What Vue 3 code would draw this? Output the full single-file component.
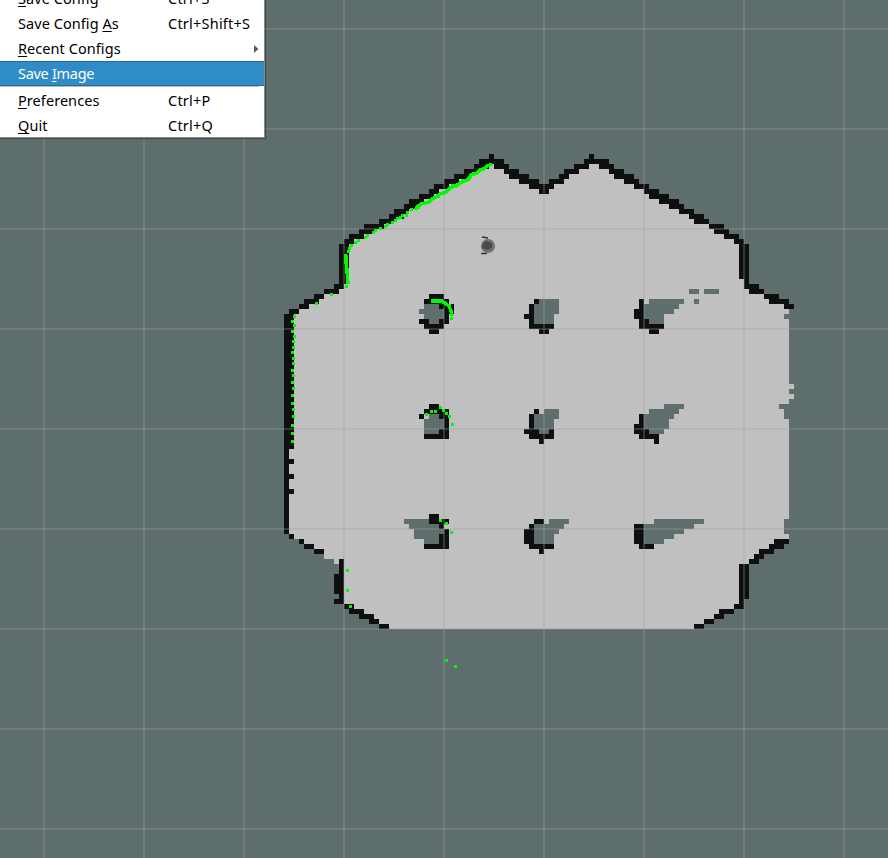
<script setup>
const gridX = Array.from({ length: 9 }, (_, i) => 43 + i * 100)
const gridY = Array.from({ length: 9 }, (_, i) => 28 + i * 100)

// Free space: [x1, y1, x2, y2]
const free = [
  [474, 164, 509, 169], [574, 164, 614, 169], [464, 169, 519, 174], [564, 169, 624, 174],
  [454, 174, 529, 179], [559, 174, 634, 179], [444, 179, 539, 184], [549, 179, 639, 184],
  [434, 184, 649, 189], [429, 189, 659, 194], [419, 194, 669, 199], [409, 199, 679, 204],
  [404, 204, 684, 209], [394, 209, 694, 214], [389, 214, 704, 219], [379, 219, 709, 224],
  [364, 224, 724, 229], [359, 229, 729, 234], [349, 234, 739, 239], [344, 239, 744, 244],
  [344, 244, 744, 289], [324, 289, 759, 294], [314, 294, 779, 299], [304, 299, 789, 304],
  [299, 304, 789, 309], [289, 309, 789, 534], [294, 534, 789, 539], [304, 539, 779, 544],
  [314, 544, 774, 549], [324, 549, 769, 554], [324, 554, 759, 559], [334, 559, 754, 564],
  [339, 564, 744, 604], [349, 604, 739, 609], [359, 609, 724, 614], [369, 614, 719, 619],
  [379, 619, 709, 624], [384, 624, 699, 629], [789, 384, 794, 389], [789, 394, 794, 399]
]

const unknown = [
  [689, 289, 699, 294], [704, 289, 719, 294], [694, 299, 699, 304],
  [784, 314, 789, 319], [779, 404, 789, 409], [784, 409, 789, 419], [784, 519, 789, 534],
  [424, 304, 444, 319], [429, 319, 439, 324], [419, 309, 424, 314],
  [539, 299, 559, 314], [534, 304, 554, 324],
  [649, 299, 684, 304], [644, 304, 679, 309], [644, 309, 674, 314], [644, 314, 664, 324],
  [424, 419, 444, 434], [429, 414, 439, 419],
  [544, 409, 559, 419], [534, 414, 554, 434],
  [664, 404, 684, 409], [649, 409, 679, 414], [644, 414, 674, 419], [644, 419, 669, 429], [649, 429, 664, 434],
  [404, 519, 429, 524], [409, 524, 439, 529], [414, 529, 444, 534], [414, 534, 439, 539], [424, 539, 439, 544],
  [549, 519, 569, 524], [534, 524, 564, 529], [534, 529, 559, 534], [534, 534, 554, 544],
  [654, 519, 704, 524], [644, 524, 694, 529], [644, 529, 684, 534], [644, 534, 674, 539], [644, 539, 664, 544]
]

const walls = [
  [489, 154, 494, 159], [479, 159, 504, 164], [474, 164, 489, 169], [464, 169, 479, 174],
  [454, 174, 469, 179], [444, 179, 459, 184], [434, 184, 449, 189], [429, 189, 439, 194],
  [419, 194, 434, 199], [409, 199, 424, 204], [404, 204, 419, 209], [394, 209, 409, 214],
  [389, 214, 404, 219], [379, 219, 394, 224], [364, 224, 384, 229], [359, 229, 374, 234],
  [349, 234, 364, 239], [344, 239, 354, 244], [344, 244, 349, 284], [339, 244, 344, 289],
  [334, 284, 344, 289], [324, 289, 339, 294], [314, 294, 324, 299], [304, 299, 319, 304],
  [299, 304, 309, 309], [289, 309, 299, 314], [284, 314, 294, 449], [284, 449, 289, 534],
  [289, 459, 294, 464], [289, 474, 294, 479], [289, 489, 294, 494], [289, 534, 294, 539],
  [299, 539, 304, 544], [304, 544, 314, 549], [314, 549, 324, 554], [339, 559, 344, 604],
  [334, 574, 339, 594], [334, 599, 339, 604], [344, 604, 354, 609], [349, 609, 364, 614],
  [359, 614, 374, 619], [369, 619, 379, 624], [379, 624, 389, 629],
  [494, 164, 509, 169], [504, 169, 519, 174], [509, 174, 529, 179], [519, 179, 539, 184],
  [529, 184, 554, 189], [539, 189, 549, 194], [549, 179, 564, 184], [559, 174, 569, 179],
  [564, 169, 579, 174], [574, 164, 589, 169], [584, 159, 609, 164], [589, 154, 594, 159],
  [599, 164, 614, 169], [609, 169, 624, 174], [614, 174, 634, 179], [624, 179, 639, 184],
  [634, 184, 649, 189], [644, 189, 659, 194], [649, 194, 669, 199], [659, 199, 679, 204],
  [669, 204, 684, 209], [679, 209, 694, 214], [689, 214, 704, 219], [694, 219, 709, 224],
  [709, 224, 724, 229], [714, 229, 729, 234], [724, 234, 739, 239], [734, 239, 744, 244],
  [739, 239, 744, 279], [744, 244, 749, 289], [744, 284, 759, 289], [749, 289, 764, 294],
  [764, 294, 779, 299], [769, 299, 789, 304], [784, 304, 794, 309],
  [774, 539, 789, 544], [769, 544, 784, 549], [759, 549, 774, 554], [754, 554, 764, 559],
  [749, 559, 759, 564], [739, 564, 749, 599], [739, 599, 744, 604], [734, 604, 744, 609],
  [719, 609, 734, 614], [714, 614, 724, 619], [704, 619, 714, 624], [694, 624, 704, 629]
]

const pillars = [
  [429, 294, 444, 299], [424, 299, 449, 304], [439, 304, 444, 309], [449, 304, 454, 314],
  [444, 304, 449, 324], [439, 319, 444, 324], [424, 324, 444, 329], [429, 329, 439, 334], [419, 319, 429, 324],
  [534, 299, 539, 304], [529, 304, 534, 329], [524, 314, 529, 319], [529, 324, 554, 329], [539, 329, 549, 334],
  [639, 299, 644, 329], [634, 309, 639, 319], [644, 319, 649, 329], [639, 324, 664, 329], [649, 329, 659, 334],
  [429, 404, 439, 409], [424, 409, 449, 414], [419, 414, 424, 419], [439, 414, 449, 419],
  [444, 419, 449, 439], [439, 429, 444, 439], [424, 434, 444, 439],
  [534, 409, 539, 414], [529, 414, 534, 439], [524, 429, 539, 434], [529, 434, 554, 439], [549, 429, 554, 434], [539, 439, 544, 444],
  [639, 414, 644, 439], [634, 424, 639, 434], [644, 429, 649, 439], [639, 434, 659, 439], [654, 439, 659, 444],
  [429, 514, 439, 524], [439, 519, 449, 524], [439, 524, 444, 529], [444, 529, 449, 544],
  [439, 534, 444, 549], [424, 544, 449, 549],
  [534, 519, 544, 524], [529, 524, 534, 529], [524, 529, 534, 544], [529, 544, 554, 549], [539, 549, 544, 554],
  [634, 524, 644, 544], [639, 544, 654, 549]
]

const path = (cells) => cells.map(([a, b, c, d]) => `M${a} ${b}H${c}V${d}H${a}Z`).join('')

const scanLines = [
  '415,210 417,207 421,204 429,202 432,199 436,197 440,194 446,192 449,189 453,186 456,186 460,183 469,179 471,175 477,173 480,170 485,168 487,166 492,164',
  '346,255 346,262 347,270 348,284',
  '431,301 442,301 446,304 449,306 451,311 452,316'
]

const scanPoints = [
  [419, 206], [418, 208], [433, 199], [438, 197], [443, 194], [452, 186], [463, 181], [468, 179], [473, 174], [482, 170], [437, 301], [440, 301], [449, 306],
  [411, 210], [407, 213], [406, 216], [402, 216], [400, 218], [397, 219], [395, 221], [392, 223],
  [387, 225], [385, 227], [380, 229], [375, 231], [373, 233], [367, 236], [365, 238], [358, 241], [355, 243],
  [351, 246], [349, 249], [348, 252], [345, 256], [346, 287], [331, 295], [316, 304],
  [294, 317], [292, 322], [294, 326], [292, 332], [294, 337], [293, 342], [293, 348], [292, 353], [293, 359],
  [293, 364], [292, 371], [293, 376], [292, 383], [293, 389], [292, 396], [292, 404], [293, 410], [293, 417],
  [292, 426], [292, 434], [292, 442],
  [451, 319], [426, 415], [431, 412], [435, 412], [440, 408], [443, 411], [446, 414], [449, 417], [452, 425],
  [440, 521], [446, 524], [451, 533], [347, 571], [347, 591], [350, 607], [446, 661], [455, 667]
]
const scanPath = scanPoints.map(([x, y]) => `M${x - 1} ${y - 2}h3v3h-3Z`).join('')

const items = [
  { parts: ['', 'S', 'ave Config'], keys: 'Ctrl+S' },
  { parts: ['Save Config ', 'A', 's'], keys: 'Ctrl+Shift+S' },
  { parts: ['', 'R', 'ecent Configs'], submenu: true },
  { parts: ['Save ', 'I', 'mage'], active: true },
  { separator: true },
  { parts: ['', 'P', 'references'], keys: 'Ctrl+P' },
  { parts: ['', 'Q', 'uit'], keys: 'Ctrl+Q' }
]
</script>

<template>
  <main class="viewer">
    <svg class="map" width="888" height="858" viewBox="0 0 888 858" shape-rendering="crispEdges">
      <path class="free" :d="path(free)" />
      <path class="unknown" :d="path(unknown)" />
      <path class="wall" :d="path(walls) + path(pillars)" />
      <g class="grid">
        <rect v-for="x in gridX" :key="'x' + x" :x="x" y="0" width="2" height="858" />
        <rect v-for="y in gridY" :key="'y' + y" x="0" :y="y" width="888" height="2" />
      </g>
      <g class="scan">
        <polyline v-for="line in scanLines" :key="line" :points="line" />
        <path :d="scanPath" />
      </g>
      <g shape-rendering="auto">
        <circle cx="488" cy="246" r="7" fill="#727272" />
        <path d="M483 243L487 241L492 243L492 248L487 250L482 248Z" fill="#4b4b4b" />
        <path d="M482 237L488 238M481 253.500L487 253.500" stroke="#303030" stroke-width="1.500" />
      </g>
    </svg>

    <nav class="menu">
      <template v-for="(item, i) in items" :key="i">
        <div v-if="item.separator" class="separator"></div>
        <div v-else class="item" :class="{ active: item.active }">
          <span class="label">{{ item.parts[0] }}<span class="mnemonic">{{ item.parts[1] }}</span>{{ item.parts[2] }}</span>
          <span class="keys">{{ item.keys }}</span>
          <svg v-if="item.submenu" class="arrow" width="5" height="8" viewBox="0 0 5 8"><path d="M0 0L4.500 4L0 8Z" /></svg>
        </div>
      </template>
    </nav>
  </main>
</template>

<style>
body { margin: 0; background: #5e6e6c; overflow: hidden; }
</style>

<style scoped>
.viewer { position: relative; width: 888px; height: 858px; overflow: hidden; background: #5e6e6c; }
.map { display: block; }
.free { fill: #c0c0c0; }
.unknown { fill: #5e6e6c; }
.wall { fill: #0f0f0f; }
.grid { fill: rgba(160, 160, 164, 0.28); }
.scan { fill: #00fa00; }
.scan polyline { fill: none; stroke: #00fa00; stroke-width: 3.500; }
.menu {
  position: absolute; left: 0; top: -14px; width: 264px; height: 151px;
  background: #fff; border-right: 1px solid #858988; border-bottom: 1px solid #858988;
  box-shadow: 1px 1px 1px rgba(0, 0, 0, 0.3);
  font: 14.500px/25px "Noto Sans", "Open Sans", sans-serif; color: #000;
}
.item { display: flex; align-items: center; box-sizing: border-box; height: 25px; padding: 0 5px 0 18px; white-space: pre; }
.active { background: #308cc6; color: #fff; box-shadow: inset 0 1px #236d9d, inset 0 -1px #236d9d; }
.label { width: 150px; letter-spacing: 0.060px; }
.active .label { letter-spacing: -0.300px; }
.keys { flex: 1; letter-spacing: 0.220px; }
.mnemonic { text-decoration: underline; text-decoration-thickness: 1px; text-underline-offset: 2px; text-decoration-skip-ink: none; }
.arrow { fill: #5c5c5c; }
.separator { height: 1px; margin: 0 5px 1px 0; background: #b8b5b2; }
</style>
